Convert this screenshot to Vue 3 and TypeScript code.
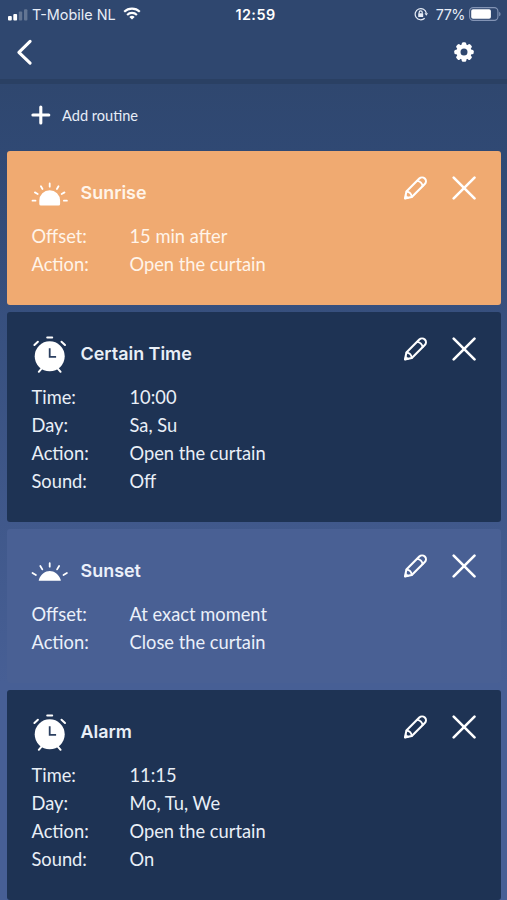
<script setup lang="ts">
interface Detail {
  label: string
  value: string
}

interface Routine {
  title: string
  icon: 'sunrise' | 'sunset' | 'clock'
  theme: 'orange' | 'navy' | 'blue'
  details: Detail[]
}

const routines: Routine[] = [
  {
    title: 'Sunrise',
    icon: 'sunrise',
    theme: 'orange',
    details: [
      { label: 'Offset:', value: '15 min after' },
      { label: 'Action:', value: 'Open the curtain' },
    ],
  },
  {
    title: 'Certain Time',
    icon: 'clock',
    theme: 'navy',
    details: [
      { label: 'Time:', value: '10:00' },
      { label: 'Day:', value: 'Sa, Su' },
      { label: 'Action:', value: 'Open the curtain' },
      { label: 'Sound:', value: 'Off' },
    ],
  },
  {
    title: 'Sunset',
    icon: 'sunset',
    theme: 'blue',
    details: [
      { label: 'Offset:', value: 'At exact moment' },
      { label: 'Action:', value: 'Close the curtain' },
    ],
  },
  {
    title: 'Alarm',
    icon: 'clock',
    theme: 'navy',
    details: [
      { label: 'Time:', value: '11:15' },
      { label: 'Day:', value: 'Mo, Tu, We' },
      { label: 'Action:', value: 'Open the curtain' },
      { label: 'Sound:', value: 'On' },
    ],
  },
]

const gearTeeth: number[] = [0, 45, 90, 135, 180, 225, 270, 315]
</script>

<template>
  <div class="screen">
    <header class="top">
      <div class="status">
        <div class="status-left">
          <svg class="signal" width="20" height="12" viewBox="0 0 20 12" fill="#fff">
            <rect x="0" y="7" width="3.8" height="4.5" rx="1" />
            <rect x="5.3" y="5" width="3.8" height="6.5" rx="1" />
            <rect x="10.8" y="2.6" width="3.4" height="8.9" rx="1" opacity=".25" />
            <rect x="16" y="0.2" width="3.4" height="11.3" rx="1" opacity=".25" />
          </svg>
          <span class="carrier">T-Mobile NL</span>
          <svg class="wifi" width="18" height="13" viewBox="0 0 18 13" fill="none" stroke="#fff" stroke-width="2.1">
            <path d="M1.2 4.8a11.2 11.2 0 0 1 15.6 0" />
            <path d="M4.1 7.9a7 7 0 0 1 9.8 0" />
            <path d="M9 12.6 6.3 9.9a4 4 0 0 1 5.4 0z" fill="#fff" stroke="none" />
          </svg>
        </div>
        <span class="time">12:59</span>
        <div class="status-right">
          <svg class="lock" width="14" height="14" viewBox="0 0 14 14" fill="none" stroke="#e7edf7" stroke-width="1.2">
            <path d="M10.7 11.2A5.6 5.6 0 1 1 12.3 6.2" />
            <path d="M10.5 6.2h3.5l-1.7 2.5z" fill="#e7edf7" stroke="none" />
            <rect x="4.2" y="6.2" width="5" height="3.8" rx=".5" fill="#e7edf7" stroke="none" />
            <path d="M5.2 6.5V5.3a1.5 1.5 0 0 1 3 0v1.2" />
          </svg>
          <span class="percent">77%</span>
          <svg class="battery" width="32" height="14" viewBox="0 0 32 14">
            <rect x=".6" y=".6" width="28.3" height="12.8" rx="3.6" fill="none" stroke="#8394b5" stroke-width="1.1" />
            <rect x="2.2" y="2.2" width="19.7" height="9.6" rx="1.8" fill="#fff" />
            <path d="M30.2 4.7c1.8.8 1.8 3.8 0 4.6z" fill="#8394b5" />
          </svg>
        </div>
      </div>
      <nav class="nav">
        <button class="icon-button" aria-label="Back">
          <svg width="18" height="28" viewBox="0 0 18 28" fill="none" stroke="#fff" stroke-width="3.1" stroke-linecap="round" stroke-linejoin="round">
            <path d="M15.1 3.4 3.9 14.3l11.2 10.9" />
          </svg>
        </button>
        <button class="icon-button" aria-label="Settings">
          <svg width="20" height="20" viewBox="-10 -10 20 20">
            <rect v-for="angle in gearTeeth" :key="angle" x="-2.3" y="-9.7" width="4.6" height="5" rx="1.5" fill="#fff" :transform="`rotate(${angle})`" />
            <circle r="5.6" fill="none" stroke="#fff" stroke-width="4.2" />
          </svg>
        </button>
      </nav>
    </header>

    <main class="body">
      <button class="add">
        <svg width="20" height="20" viewBox="0 0 20 20" stroke="#fff" stroke-width="3.1" stroke-linecap="round">
          <path d="M9.8 2v16M1.9 10h15.9" />
        </svg>
        <span>Add routine</span>
      </button>

      <section class="list">
        <article v-for="routine in routines" :key="routine.title" class="card" :class="routine.theme">
          <div class="card-head">
            <svg v-if="routine.icon === 'sunrise'" class="kind" viewBox="0 0 38 40" stroke="#fff" stroke-width="1.8" stroke-linecap="round">
              <path d="M9.8 32.5q-1.5 0-1.5-1.5v-3.4a10.4 10.4 0 0 1 20.8 0V31q0 1.5-1.5 1.5z" fill="#fff" stroke="none" />
              <path d="M18.7 10.5v3.2M9.9 13.2l1.6 2.8M27.5 13.2 25.9 16M3.9 19.4l2.8 1.6M33.5 19.4 30.7 21M1.5 27.7h3M32.9 27.7h3" />
            </svg>
            <svg v-else-if="routine.icon === 'sunset'" class="kind" viewBox="0 0 38 40" stroke="#fff" stroke-width="1.8" stroke-linecap="round">
              <path d="M8.1 29.7q-.7 0-.3-.8c4.2-11.8 17.6-11.8 22 0q.3.8-.4.8z" fill="#fff" stroke="none" />
              <path d="M18.7 12.2v3.5M9.3 15l2 3.4M28.1 15l-2 3.4M1.5 22l3.4 2M35.9 22l-3.4 2" />
            </svg>
            <svg v-else class="kind" viewBox="0 0 38 40" fill="none" stroke="#fff" stroke-width="2" stroke-linecap="round">
              <circle cx="18.7" cy="22.3" r="15" fill="#fff" stroke="none" />
              <path d="M16.2 3.4h5M3.4 11l3.5-3.3M34 11l-3.5-3.3M7.8 37.8l3.4-4M29.6 37.8l-3.4-4" />
              <path d="M18.7 14.2v8.6h6.4" stroke="#2b3f60" stroke-width="1.8" stroke-linecap="butt" />
            </svg>
            <h2>{{ routine.title }}</h2>
            <div class="actions">
              <button class="icon-button" aria-label="Edit">
                <svg width="24" height="24" viewBox="0 0 24 24" fill="none" stroke="#fff" stroke-width="2.1" stroke-linecap="round" stroke-linejoin="round">
                  <path d="M1 22.4l1.4-6.8L15.3 2.6a3.8 3.8 0 0 1 5.5 5.5L7.8 21z" />
                  <path d="M2.6 15.7c2.7.3 4.8 2.4 5.1 5.1M13.3 4.8c2.8.4 4.9 2.5 5.3 5.3" stroke-width="1.8" />
                  <path d="M1 22.4l.6-3.2 2.7 2.5z" fill="#fff" stroke-width="1" />
                </svg>
              </button>
              <button class="icon-button" aria-label="Remove">
                <svg width="25" height="24" viewBox="0 0 25 24" fill="none" stroke="#fff" stroke-width="2.6" stroke-linecap="round">
                  <path d="M1.7 1.6l20.8 20.8M22.5 1.6 1.7 22.4" />
                </svg>
              </button>
            </div>
          </div>
          <dl>
            <div v-for="detail in routine.details" :key="detail.label" class="row">
              <dt>{{ detail.label }}</dt>
              <dd>{{ detail.value }}</dd>
            </div>
          </dl>
        </article>
      </section>
    </main>
  </div>
</template>

<style>
body {
  margin: 0;
  background: #475f95;
}
</style>

<style scoped>
.screen {
  box-sizing: border-box;
  width: 100%;
  height: 900px;
  display: flex;
  flex-direction: column;
  overflow: hidden;
  color: #fff;
  font-family: Lato, "Liberation Sans", sans-serif;
}

.top {
  box-sizing: border-box;
  height: 84px;
  flex: none;
  background: #2f476f;
  border-bottom: 5px solid #2a4063;
}

.status {
  height: 28px;
  display: grid;
  grid-template-columns: 1fr auto 1fr;
  align-items: center;
  padding: 0 6px 0 8px;
  font-family: Inter, "Liberation Sans", sans-serif;
  font-size: 14.4px;
  color: #e7edf7;
}

.status-left,
.status-right {
  display: flex;
  align-items: center;
}

.status-right {
  justify-content: flex-end;
}

.signal {
  margin: 1px 4px 0 0;
}

.wifi {
  margin: -2px 0 0 7px;
}

.time {
  padding-left: 2px;
  font-weight: 600;
  color: #fff;
  letter-spacing: 0.45px;
}

.percent {
  margin: 0 4px 0 8px;
  letter-spacing: -0.5px;
}

.nav {
  height: 48px;
  display: flex;
  align-items: center;
  justify-content: space-between;
  padding: 0 33px 0 15px;
}

button {
  padding: 0;
  border: 0;
  background: none;
  color: inherit;
  font: inherit;
}

.icon-button {
  display: flex;
}

.body {
  flex: 1;
  min-height: 0;
  background: linear-gradient(#2f476f 0, #304974 70px, #475f95 600px);
}

.add {
  height: 67px;
  display: flex;
  align-items: center;
  gap: 11px;
  padding: 0 0 5px 31px;
  font-size: 14.6px;
  color: #e7edf7;
}

.list {
  display: grid;
  gap: 7px;
  padding: 0 6px 0 7px;
}

.card {
  box-sizing: border-box;
  padding: 22px 24px 26px;
  border-radius: 3px;
}

.orange {
  background: #f0aa71;
  color: #fff4e9;
}

.navy {
  background: #1e3354;
  color: #e9eff7;
}

.blue {
  background: #496094;
  color: #ebf0fa;
}

.card-head {
  height: 40px;
  display: flex;
  align-items: center;
  margin-bottom: 10px;
}

.kind {
  width: 38px;
  height: 40px;
  flex: none;
}

h2 {
  margin: 0 0 0 11.6px;
  font-family: Inter, "Liberation Sans", sans-serif;
  font-size: 17.9px;
  font-weight: 600;
  line-height: 24px;
}

.actions {
  display: flex;
  gap: 24px;
  margin: 0 0 10px auto;
}

dl {
  margin: -1px 0 1px 0.5px;
}

.row {
  display: grid;
  grid-template-columns: 98px 1fr;
  height: 28px;
  font-size: 18.3px;
  line-height: 28px;
}

dd {
  margin: 0;
}
</style>
